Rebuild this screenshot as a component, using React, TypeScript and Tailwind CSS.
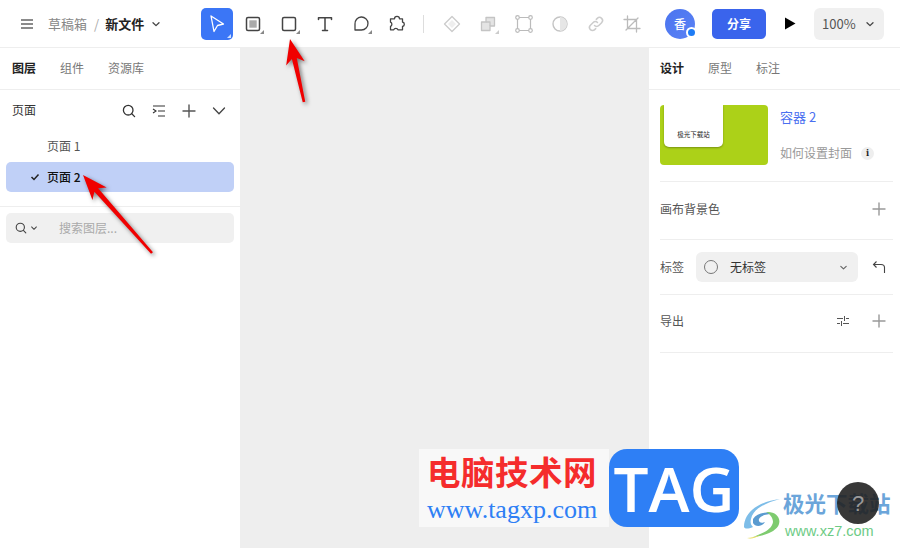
import React from "react";

const S = ({ size = 18, color = "#333", w = 1.5, children }: { size?: number; color?: string; w?: number; children: React.ReactNode }) => (
  <svg width={size} height={size} viewBox={`0 0 ${size} ${size}`} fill="none" stroke={color} strokeWidth={w} strokeLinecap="round" strokeLinejoin="round">
    {children}
  </svg>
);

const Corner = ({ color = "#888" }: { color?: string }) => (
  <svg width="4" height="4" viewBox="0 0 4 4" className="absolute right-[7px] bottom-[6px]">
    <path d="M4 0V4H0Z" fill={color} />
  </svg>
);

const Slot = ({ children, corner, active, cornerClass }: { children: React.ReactNode; corner?: boolean; active?: boolean; cornerClass?: string }) => (
  <div className="relative w-9 h-8 flex items-center justify-center">
    {active ? (
      <div className="relative w-8 h-8 rounded-[5px] bg-[#3b76f6] flex items-center justify-center">
        {children}
        <svg width="4" height="4" viewBox="0 0 4 4" className="absolute right-[2px] bottom-[2px]">
          <path d="M4 0V4H0Z" fill="#cfe0ff" />
        </svg>
      </div>
    ) : (
      children
    )}
    {corner && <Corner color={cornerClass} />}
  </div>
);

const Plus = ({ color = "#555" }: { color?: string }) => (
  <S size={14} color={color} w={1.4}>
    <path d="M7 1v12M1 7h12" />
  </S>
);

const Chevron = ({ size = 10, color = "#444" }: { size?: number; color?: string }) => (
  <svg width={size} height={size} viewBox="0 0 10 10" fill="none" stroke={color} strokeWidth="1.3" strokeLinecap="round" strokeLinejoin="round">
    <path d="M2 3.7 5 6.6 8 3.7" />
  </svg>
);

const Search = ({ size = 14, color = "#333" }: { size?: number; color?: string }) => (
  <svg width={size} height={size} viewBox="0 0 14 14" fill="none" stroke={color} strokeWidth="1.3" strokeLinecap="round">
    <circle cx="6.2" cy="6.2" r="4.8" />
    <path d="M9.8 9.8 12.6 12.6" />
  </svg>
);

const Header = () => (
  <header className="h-[48px] shrink-0 flex items-center border-b border-[#eeeeee] bg-white">
    <div className="w-[199px] shrink-0 flex items-center pl-[21px]">
      <svg width="12" height="10" viewBox="0 0 12 10" stroke="#666" strokeWidth="1.5">
        <path d="M0 1h12M0 5h12M0 9h12" />
      </svg>
      <span className="ml-[15px] text-[13px] text-[#888]">草稿箱</span>
      <span className="ml-[7px] text-[13px] text-[#aaa]">/</span>
      <span className="ml-[6px] text-[13px] font-bold text-[#222]">新文件</span>
      <span className="ml-[7px]"><Chevron /></span>
    </div>
    <div className="flex items-center">
      <Slot active>
        <svg width="16" height="18" viewBox="0 0 16 18" fill="none" stroke="#fff" strokeWidth="1.3" strokeLinejoin="round">
          <path d="M2 1 14.500 9 8.500 10.500 5 16.500Z" />
        </svg>
      </Slot>
      <Slot corner>
        <S size={16} color="#444">
          <rect x="1.500" y="1.500" width="13" height="13" rx="1.500" />
          <rect x="4.300" y="4.300" width="7.400" height="7.400" fill="#aaa" stroke="none" />
        </S>
      </Slot>
      <Slot corner>
        <S size={16} color="#444">
          <rect x="1.500" y="1.500" width="13" height="13" rx="1.500" />
        </S>
      </Slot>
      <Slot>
        <S size={16} color="#444">
          <path d="M1.500 3.500V1.800h13v1.700M8 1.800v12.700M5.500 14.500h5" />
        </S>
      </Slot>
      <Slot corner>
        <S size={18} color="#444" w={1.3}>
          <path d="M3 15V9a6.500 6.500 0 1 1 6.500 6Z" />
        </S>
      </Slot>
      <Slot>
        <S size={18} color="#444" w={1.3}>
          <path d="M6.500 3.800a2.500 2.500 0 0 1 5 0h3v3.200a2.300 2.300 0 0 1 0 4.500v3.300H10a2.300 2.300 0 0 0-4.300 0H2.500v-3.400a2.300 2.300 0 0 0 0-4.200V3.800Z" />
        </S>
      </Slot>
    </div>
    <div className="ml-[8px] w-px h-[18px] bg-[#dddddd]" />
    <div className="ml-[10px] flex items-center">
      <Slot>
        <S size={18} color="#cccccc" w={1.4}>
          <path d="M9 1.500 16.500 9 9 16.500 1.500 9Z" />
          <path d="M9 5 13 9 9 13 5 9Z" fill="#eeeeee" stroke="none" />
        </S>
      </Slot>
      <Slot corner cornerClass="#cccccc">
        <svg width="16" height="16" viewBox="0 0 16 16" fill="#e4e4e4" stroke="#c4c4c4" strokeWidth="1.300" strokeLinejoin="round">
          <path d="M6 1.500h8.500v8.500H10v4.500H1.500V6H6Z" />
          <path d="M6 6h4v4" fill="none" />
        </svg>
      </Slot>
      <Slot>
        <S size={18} color="#bbbbbb" w={1.2}>
          <path d="M4.500 2.500h9M4.500 15.500h9M2.500 4.500v9M15.500 4.500v9" />
          <circle cx="2.500" cy="2.500" r="1.800" />
          <circle cx="15.500" cy="2.500" r="1.800" />
          <circle cx="2.500" cy="15.500" r="1.800" />
          <circle cx="15.500" cy="15.500" r="1.800" />
        </S>
      </Slot>
      <Slot>
        <svg width="16" height="16" viewBox="0 0 16 16" fill="none" stroke="#c4c4c4" strokeWidth="1.400">
          <circle cx="8" cy="8" r="7" />
          <path d="M8 1a7 7 0 0 1 0 14Z" fill="#e6e6e6" stroke="none" />
        </svg>
      </Slot>
      <Slot>
        <S size={18} color="#cccccc">
          <path d="M7.500 10.500a3 3 0 0 0 4.300 0l2.800-2.800a3 3 0 0 0-4.300-4.300L9.300 4.400M10.500 7.500a3 3 0 0 0-4.300 0L3.400 10.300a3 3 0 0 0 4.300 4.300l1-1" />
        </S>
      </Slot>
      <Slot>
        <S size={18} color="#bbbbbb" w={1.3}>
          <path d="M4.500 1v12.500H17M1 4.500h12.500V17M3 15 15 3" />
        </S>
      </Slot>
    </div>
    <div className="relative ml-[15px] w-[30px] h-[30px] rounded-full bg-gradient-to-br from-[#4a74ef] to-[#5b82f5] flex items-center justify-center text-white text-[12px] font-medium">
      <span>香</span>
      <span className="absolute -right-[2px] bottom-[1px] w-[7px] h-[7px] rounded-full bg-[#1f7cf5] border-2 border-white box-content" />
    </div>
    <div className="ml-[17px] w-[54px] h-[30px] rounded-[5px] bg-[#3a64ec] flex items-center justify-center text-white text-[12px] font-bold">分享</div>
    <div className="w-[48px] flex items-center justify-center">
      <svg width="12" height="13" viewBox="0 0 12 13"><path d="M1 .5 11.500 6.500 1 12.500Z" fill="#000" /></svg>
    </div>
    <div className="w-[70px] h-[32px] rounded-[6px] bg-[#f0f0f0] flex items-center pl-[8px] text-[#555] text-[13px]">
      <span>100%</span>
      <span className="ml-[9px]"><Chevron /></span>
    </div>
  </header>
);

const LeftPanel = () => (
  <aside className="w-[240px] shrink-0 bg-white flex flex-col">
    <div className="h-[42px] shrink-0 flex items-center pl-[12px] pb-[2px] gap-[24px] text-[12px] border-b border-[#eeeeee]">
      <span className="font-bold text-[#222]">图层</span>
      <span className="text-[#777]">组件</span>
      <span className="text-[#777]">资源库</span>
    </div>
    <div className="h-[40px] shrink-0 flex items-center pl-[12px]">
      <span className="text-[12px] text-[#333] w-[102px]">页面</span>
      <div className="w-[30px] flex justify-center pt-[2px]"><Search /></div>
      <div className="w-[30px] flex justify-center pt-[2px]">
        <svg width="14" height="14" viewBox="0 0 14 14" fill="none" stroke="#333" strokeWidth="1.1">
          <path d="M1 2h12M6 7h7M6 12h7M1 5l3 2-3 2" />
        </svg>
      </div>
      <div className="w-[30px] flex justify-center pt-[2px]"><Plus /></div>
      <div className="w-[30px] flex justify-center pt-[2px]">
        <svg width="14" height="14" viewBox="0 0 14 14" fill="none" stroke="#444" strokeWidth="1.3" strokeLinecap="round"><path d="M1.500 4 7 9.800 12.500 4" /></svg>
      </div>
    </div>
    <div className="h-[30px] mt-[1px] mb-[1px] flex items-center pl-[47px] text-[12px] text-[#555]">页面 1</div>
    <div className="mx-[6px] h-[30px] rounded-[5px] bg-[#c0d0f7] flex items-center text-[12px] font-medium text-[#111]">
      <span className="w-[41px] pl-[24px] flex">
        <svg width="10" height="10" viewBox="0 0 10 10" fill="none" stroke="#222" strokeWidth="1.500"><path d="M1.500 5 4 7.500 8.500 2.500" /></svg>
      </span>
      页面 2
    </div>
    <div className="mt-[14px] border-t border-[#eeeeee]" />
    <div className="mx-[6px] mt-[6px] h-[30px] rounded-[5px] bg-[#f0f0f0] flex items-center pl-[9px]">
      <Search size={12} color="#444" />
      <span className="ml-[3px]"><Chevron size={8} /></span>
      <span className="ml-[21px] text-[12px] text-[#aaa]">搜索图层...</span>
    </div>
  </aside>
);

const Row = ({ children, h }: { children: React.ReactNode; h: string }) => (
  <div className={`${h} shrink-0 flex items-center border-b border-[#eeeeee]`}>{children}</div>
);

const RightPanel = () => (
  <aside className="w-[251px] shrink-0 bg-white flex flex-col">
    <div className="h-[42px] shrink-0 flex items-center pl-[11px] pb-[2px] gap-[24px] text-[12px] border-b border-[#eeeeee]">
      <span className="font-bold text-[#222]">设计</span>
      <span className="text-[#777]">原型</span>
      <span className="text-[#777]">标注</span>
    </div>
    <div className="ml-[11px] mr-[7px] flex flex-col">
      <div className="h-[92px] shrink-0 flex border-b border-[#eeeeee] pt-[15px]">
        <div className="w-[108px] h-[60px] rounded-[4px] bg-[#acd118] overflow-hidden">
          <div className="ml-[4px] w-[59px] h-[42px] bg-white rounded-b-[5px] shadow-[0_1px_2px_rgba(0,0,0,0.3)] flex items-end justify-center pb-[9px]">
            <span className="text-[6.500px] leading-[8px] text-[#222] whitespace-nowrap">极光下载站</span>
          </div>
        </div>
        <div className="ml-[12px] flex flex-col">
          <span className="text-[13px] leading-[18px] mt-[3px] text-[#4a6ff0]">容器 2</span>
          <div className="flex items-center mt-[18px]">
            <span className="text-[12px] leading-[18px] text-[#999]">如何设置封面</span>
            <span className="ml-[9px] mt-[1px] w-[13px] h-[13px] rounded-full bg-[#eeeeee] flex items-center justify-center text-[10px] font-bold text-[#222] font-serif">i</span>
          </div>
        </div>
      </div>
      <Row h="h-[58px] pb-[4px]">
        <span className="text-[12px] text-[#555]">画布背景色</span>
        <span className="ml-auto mr-[7px]"><Plus color="#999" /></span>
      </Row>
      <Row h="h-[55px]">
        <span className="text-[12px] text-[#555]">标签</span>
        <div className="ml-[12px] w-[162px] h-[30px] rounded-[6px] bg-[#f0f0f0] flex items-center pl-[8px]">
          <span className="w-[14px] h-[14px] rounded-full border border-[#777]" />
          <span className="ml-[12px] text-[12px] text-[#333]">无标签</span>
          <span className="ml-auto mr-[10px]"><Chevron size={9} color="#666" /></span>
        </div>
        <span className="ml-auto mr-[7px]">
          <svg width="14" height="14" viewBox="0 0 14 14" fill="none" stroke="#444" strokeWidth="1.1"><path d="M12.500 13V7.500C12.500 5.500 11 4.500 9 4.500H2M4.500 1.500 1.500 4.500 4.500 7.500" /></svg>
        </span>
      </Row>
      <Row h="h-[58px] pb-[5px]">
        <span className="text-[12px] text-[#555]">导出</span>
        <span className="ml-auto mr-[22px]">
          <svg width="14" height="14" viewBox="0 0 14 14" fill="none" stroke="#555" strokeWidth="1"><path d="M1 4.500h6M10 4.500h3M8.500 2v5M1 9.500h3M7 9.500h6M5.500 7v5" /></svg>
        </span>
        <span className="mr-[7px]"><Plus color="#999" /></span>
      </Row>
    </div>
  </aside>
);

const Arrow = ({ x1, y1, x2, y2 }: { x1: number; y1: number; x2: number; y2: number }) => {
  const dx = x2 - x1, dy = y2 - y1, len = Math.hypot(dx, dy);
  const ux = dx / len, uy = dy / len, nx = -uy, ny = ux;
  const p = (a: number, b: number) => `${x1 + ux * a + nx * b},${y1 + uy * a + ny * b}`;
  const head = 23;
  return (
    <polygon
      points={[p(0, 0), p(head + 2, 9.500), p(head - 3, 2.500), p(len, 1.300), p(len, -1.300), p(head - 3, -2.500), p(head + 2, -9.500)].join(" ")}
      fill="#f00000"
    />
  );
};

const Overlays = () => (
  <>
    <svg className="absolute left-0 top-0 pointer-events-none drop-shadow-[2px_2px_2px_rgba(0,0,0,0.5)]" width="900" height="548">
      <Arrow x1={290} y1={39} x2={304} y2={102} />
      <Arrow x1={83} y1={175} x2={152} y2={253} />
    </svg>
    <div className="absolute left-[419px] top-[449px] w-[190px] h-[78px] bg-[#f8f8f8] pl-[8px] pt-[2px]">
      <div className="text-[33.500px] leading-[40px] font-bold text-[#f52c2c] tracking-[0.5px] whitespace-nowrap font-['Noto_Sans_CJK_SC',sans-serif]">电脑技术网</div>
      <div className="text-[26px] leading-[30px] mt-[4px] text-[#2e7ff5] whitespace-nowrap font-['Liberation_Serif',serif]">www.tagxp.com</div>
    </div>
    <div className="absolute left-[609px] top-[449px] w-[130px] h-[78px] rounded-[18px] bg-[#2e7ff5] flex items-center justify-center text-white text-[62px] font-semibold font-['Open_Sans',sans-serif]">TAG</div>
    <svg className="absolute left-[741px] top-[497px]" width="44" height="44" viewBox="0 0 44 44">
      <path d="M3 30C3 14 20 4 39 2 24 6 12 12 10 22 9 26 10 28 12 30 7 32 4 32 3 30Z" fill="#7dbde8" />
      <path d="M12 22C16 16 26 14 32 17 26 17 20 18 18 22 17 25 20 27 24 25 21 30 14 30 12 26Z" fill="#5a9bd0" />
      <path d="M25 15C34 14 40 20 38 27 36 34 24 39 12 40 20 37 31 33 32 25 32 21 29 17 25 15Z" fill="#7ecb6f" />
      <path d="M6 41C10 41 14 40 19 38 15 41 10 42 6 41Z" fill="#e6d94e" />
    </svg>
    <div className="absolute left-[783px] top-[489px] text-[21.500px] leading-[28px] font-bold text-[#6ba5da] whitespace-nowrap font-['Noto_Sans_CJK_SC',sans-serif]">极光下载站</div>
    <div className="absolute left-[785px] top-[522px] text-[14.500px] leading-[18px] font-medium text-[#6dcb85] whitespace-nowrap font-['Liberation_Sans',sans-serif]">www.xz7.com</div>
    <div className="absolute left-[837px] top-[482px] w-[42px] h-[42px] rounded-full bg-[#222222]/90 flex items-center justify-center text-[#999] text-[22px] font-['Liberation_Sans',sans-serif]">?</div>
  </>
);

export default function App() {
  return (
    <div className="relative w-[900px] h-[548px] overflow-hidden flex flex-col bg-white font-['Noto_Sans_CJK_SC','Noto_Sans',sans-serif]">
      <Header />
      <div className="flex-1 flex min-h-0">
        <LeftPanel />
        <main className="flex-1 bg-[#eeeeee]" />
        <RightPanel />
      </div>
      <Overlays />
    </div>
  );
}
